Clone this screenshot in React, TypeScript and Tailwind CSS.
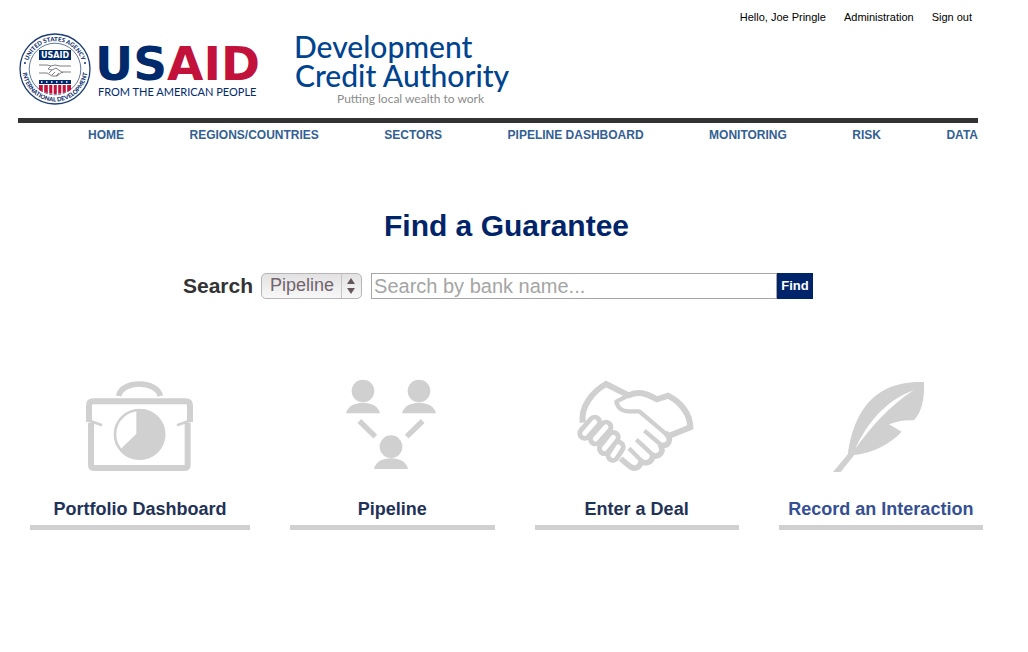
import React from "react";

const navItems = ["HOME", "REGIONS/COUNTRIES", "SECTORS", "PIPELINE DASHBOARD", "MONITORING", "RISK", "DATA"];

function UsaidLogo() {
  return (
    <svg role="img" aria-label="USAID" width="246" height="74" viewBox="18 32 246 74" className="shrink-0 overflow-visible">
      <defs>
        <path id="sealTop" d="M27.2 69 A27.8 27.8 0 0 1 82.8 69" />
        <path id="sealBottom" d="M23.9 60 A32.4 32.4 0 1 0 86.1 60" />
      </defs>
      <circle cx="55" cy="69" r="35" fill="#fff" stroke="#1d3d77" strokeWidth="1.3" />
      <circle cx="55" cy="69" r="25.8" fill="none" stroke="#1d3d77" strokeWidth="0.7" />
      <g fill="#12326e" fontFamily="Lato, sans-serif" fontWeight="900" fontSize="6">
        <text textAnchor="middle"><textPath href="#sealTop" startOffset="50%">UNITED STATES AGENCY</textPath></text>
        <text textAnchor="middle"><textPath href="#sealBottom" startOffset="50%">INTERNATIONAL DEVELOPMENT</textPath></text>
      </g>
      <circle cx="25" cy="63" r="1" fill="#12326e" />
      <circle cx="85" cy="63" r="1" fill="#12326e" />
      <rect x="39" y="50" width="32" height="10" fill="#002a6c" />
      <text x="55" y="58" textAnchor="middle" fill="#fff" fontFamily="DejaVu Sans, sans-serif" fontWeight="700" fontSize="8">USAID</text>
      <g fill="none" stroke="#6f7075" strokeWidth="0.9" strokeLinejoin="round">
        <path d="M39 65h8l4 1 4-1 5 1h11M39 73h8l5 3 5 0 5-4h9" />
        <path d="M51 66l-3 3 4 1 4-2 7 5M49 73l3-3M52 75l3-3M56 76l3-3" />
      </g>
      <rect x="39" y="80" width="32" height="4" fill="#002a6c" />
      <path d="M41 82H70" stroke="#fff" strokeWidth="1.4" strokeDasharray="1.5 3.5" />
      <path d="M39 85H71V90Q66 93 55 94Q44 93 39 90Z" fill="#c2113a" />
      <path d="M43.5 85v10M48.5 85v10M53 85v10M57.5 85v10M62 85v10M66.5 85v10" stroke="#fff" strokeWidth="1.4" />
      <text x="95" y="80" fontFamily="DejaVu Sans, sans-serif" fontWeight="700" fontSize="47" fill="#002a6c">
        US<tspan fill="#c2113a">AID</tspan>
      </text>
      <text x="98" y="96" fontFamily="Lato, sans-serif" fontSize="11" fill="#002a6c">FROM THE AMERICAN PEOPLE</text>
    </svg>
  );
}

function DcaLogo() {
  return (
    <svg role="img" aria-label="Development Credit Authority" width="230" height="74" viewBox="290 32 230 74" className="shrink-0 overflow-visible" fontFamily="Lato, sans-serif">
      <g fill="#00438f" fontSize="30" fontWeight="500">
        <text x="294" y="58">Development</text>
        <text x="295" y="87">Credit Authority</text>
      </g>
      <text x="337" y="103" fontSize="12" fill="#8b8b8b">Putting local wealth to work</text>
    </svg>
  );
}

function BriefcaseIcon() {
  return (
    <svg width="140" height="110" viewBox="0 0 420 330" fill="none" stroke="#d0d0d0" aria-hidden="true">
      <path d="M146 78C155 30 260 30 271 78" strokeWidth="17" />
      <path d="M63 158V284Q63 294 74 294H342Q353 294 353 284V158" strokeWidth="18" />
      <path d="M57 156V107Q57 94 70 94H347Q360 94 360 107V156" strokeWidth="18" />
      <path d="M50 149L96 166M367 149L321 166" strokeWidth="8" />
      <circle cx="208" cy="193" r="73" strokeWidth="8" />
      <path d="M199 117H208A76 76 0 1 1 150 239L199 191Z" fill="#d0d0d0" stroke="none" />
    </svg>
  );
}

function PeopleIcon() {
  const people = [[99, 63], [267, 63], [183, 230]];
  return (
    <svg width="120" height="110" viewBox="6 0 360 330" fill="#d0d0d0" aria-hidden="true">
      {people.map(([x, y]) => (
        <g key={`${x}-${y}`} transform={`translate(${x} ${y})`}>
          <circle r="34" />
          <path d="M-51 67C-46 45 -25 35 0 35S46 45 51 67Z" />
        </g>
      ))}
      <path d="M88 153L136 200M278 153L230 200" stroke="#d0d0d0" strokeWidth="16" />
    </svg>
  );
}

function HandshakeIcon() {
  const fingers = ["M88 156L58 190", "M122 171L90 207", "M144 202L117 236", "M159 231L143 256"];
  return (
    <svg width="140" height="110" viewBox="5 0 420 330" fill="none" stroke="#d0d0d0" strokeWidth="18" aria-hidden="true">
      <path d="M52 158C46 110 80 66 122 42L190 76C220 64 238 68 275 88L308 77C345 96 374 130 375 172L308 199" />
      <path d="M195 73L153 95C158 118 177 126 196 124L222 124L300 190" strokeWidth="13" strokeLinejoin="round" />
      <path d="M300 188C324 210 308 230 286 226C298 248 278 264 262 256C262 276 244 284 228 274C220 300 202 298 190 286L166 266" strokeWidth="17" strokeLinejoin="round" />
      <path d="M237 182L290 227M213 209L264 256M191 235L228 272" strokeWidth="13" />
      {fingers.map((d) => <path key={d} d={d} strokeWidth="44" strokeLinecap="round" />)}
      {fingers.map((d) => <path key={d} d={d} stroke="#fff" strokeWidth="15" strokeLinecap="round" />)}
    </svg>
  );
}

function QuillIcon() {
  return (
    <svg width="120" height="110" viewBox="3 0 360 330" fill="#d0d0d0" aria-hidden="true">
      <path d="M39 306L84 252C98 150 145 30 312 36C314 85 306 125 282 151C255 149 230 154 207 163L245 185C210 222 160 248 103 255L62 306Z" />
      <path d="M106 236C140 165 190 95 281 61C205 110 150 175 106 236Z" fill="#fff" />
    </svg>
  );
}

const cards = [
  { label: "Portfolio Dashboard", icon: <BriefcaseIcon />, color: "text-[#1f3257]" },
  { label: "Pipeline", icon: <PeopleIcon />, color: "text-[#1f3257]" },
  { label: "Enter a Deal", icon: <HandshakeIcon />, color: "text-[#1f3257]" },
  { label: "Record an Interaction", icon: <QuillIcon />, color: "text-[#354f93]" },
];

export default function App() {
  return (
    <div className="min-h-screen bg-white font-['Liberation_Sans',Arial,sans-serif] text-black">
      <header className="pr-[50px] pl-[18px]">
        <div className="flex h-8 items-start justify-end gap-[18px] pt-[9px] pr-1.5 text-[11px] leading-4">
          <span>Hello, Joe Pringle</span>
          <a href="#administration">Administration</a>
          <a href="#sign-out">Sign out</a>
        </div>
        <div className="flex gap-[26px] border-b-[5px] border-[#333] pb-3">
          <UsaidLogo />
          <DcaLogo />
        </div>
        <nav className="flex justify-between pt-1 pl-[70px] text-[12px] leading-4 font-bold whitespace-nowrap text-[#336094]">
          {navItems.map((item) => (
            <a key={item} href={`#${item.toLowerCase().replace(/[ /]/g, "-")}`}>{item}</a>
          ))}
        </nav>
      </header>

      <main>
        <h1 className="mt-[65px] pr-[45px] pl-[30px] text-center text-[30px] leading-9 font-bold text-[#002469]">
          Find a Guarantee
        </h1>

        <form className="mt-[29px] flex justify-center pr-[50px] pl-[18px]" onSubmit={(e) => e.preventDefault()}>
          <div className="flex h-[26px] w-full max-w-[630px] items-stretch">
            <label htmlFor="scope" className="mr-2 text-[21px] leading-[26px] font-bold text-[#333]">Search</label>
            <div className="relative mr-[9px] w-[101px] shrink-0">
              <select
                id="scope"
                className="h-full w-full appearance-none rounded-[5px] border border-[#b9b4b7] bg-linear-to-b from-[#e2e2e2] to-[#f8f8f8] pb-0.5 pl-2 text-[18px] leading-[22px] text-[#72636d]"
              >
                <option>Pipeline</option>
                <option>Portfolio</option>
              </select>
              <svg className="pointer-events-none absolute top-0 right-0" width="22" height="26" viewBox="0 0 22 26" aria-hidden="true">
                <path d="M1.5 1V25" stroke="#c9c5c7" />
                <path d="M11 5L15 11H7ZM11 21L7 15H15Z" fill="#66575f" />
              </svg>
            </div>
            <input
              type="text"
              aria-label="Search by bank name"
              placeholder="Search by bank name..."
              className="min-w-0 flex-1 border border-[#a6a6a6] px-0.5 text-[20px] leading-6 text-[#333] outline-none placeholder:text-[#a5a5a5]"
            />
            <button type="submit" className="w-9 bg-[#002469] text-[13px] font-bold text-white">Find</button>
          </div>
        </form>

        <div className="mt-[71px] grid grid-cols-[220fr_204fr_204fr_204fr] gap-10 pr-[45px] pl-[30px]">
          {cards.map(({ label, icon, color }) => (
            <a
              key={label}
              href={`#${label.toLowerCase().replace(/ /g, "-")}`}
              className={`flex flex-col items-center border-b-[5px] border-[#d0d0d0] pb-1 text-center text-[18px] leading-6 font-bold ${color}`}
            >
              {icon}
              <span className="mt-[17px] whitespace-nowrap">{label}</span>
            </a>
          ))}
        </div>
      </main>
    </div>
  );
}
